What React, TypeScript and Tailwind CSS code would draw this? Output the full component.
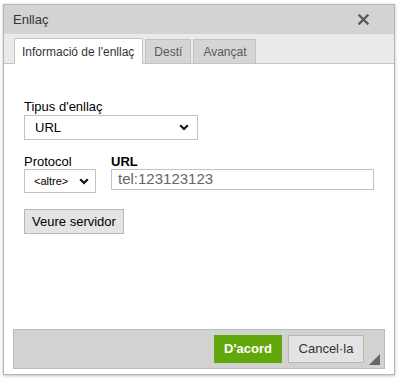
export default function App() {
  const font = { fontFamily: '"Liberation Sans", Arial, sans-serif' };

  const Chevron = () => (
    <svg width="10" height="7" viewBox="0 0 10 7" className="shrink-0">
      <path d="M1.2 1.2 L5 5 L8.8 1.2" fill="none" stroke="#111" strokeWidth="2.2" />
    </svg>
  );

  return (
    <div className="w-[399px] h-[380px] bg-white pt-[4px] pl-[3px] text-[13px] text-[#333]" style={font}>
      <div className="w-[392px] h-[371px] border border-[#b5b5b5] shadow-[0_1px_3px_rgba(0,0,0,0.25)] flex flex-col bg-white">
        {/* Title */}
        <div className="h-[29px] bg-[#d3d4d2] flex items-center justify-between pl-[9px] pr-[25px] shrink-0">
          <span className="text-[13px] text-[#333]">Enllaç</span>
          <svg width="11" height="11" viewBox="0 0 11 11">
            <path d="M1.5 1.5 L9.5 9.5 M9.5 1.5 L1.5 9.5" stroke="#5a5a5a" strokeWidth="2.4" strokeLinecap="square" />
          </svg>
        </div>

        {/* Tabs */}
        <div className="h-[30px] bg-[#eaeaea] border-b border-[#c4c4c4] flex items-end pl-[10px] gap-[2px] shrink-0 text-[12px]">
          <div className="h-[26px] -mb-px bg-white border border-b-0 border-[#c4c4c4] pl-[7px] pr-[8px] flex items-center text-[#333]">
            Informació de l'enllaç
          </div>
          <div className="h-[24px] bg-[#d5d5d5] border border-b-0 border-[#c4c4c4] pl-[8px] pr-[8px] flex items-center text-[#595959]">
            Destí
          </div>
          <div className="h-[24px] bg-[#d5d5d5] border border-b-0 border-[#c4c4c4] pl-[9px] pr-[8px] flex items-center text-[#595959]">
            Avançat
          </div>
        </div>

        {/* Content */}
        <div className="flex-1 px-[20px] pt-[35px] text-black">
          <div className="leading-[15px] mb-[1px]">Tipus d'enllaç</div>
          <div className="w-[174px] h-[25px] border border-[#c2c2c2] flex items-center justify-between pl-[10px] pr-[8px]">
            <span className="text-[13px]">URL</span>
            <Chevron />
          </div>

          <div className="flex gap-[15px] mt-[14px]">
            <div>
              <div className="leading-[15px]">Protocol</div>
              <div className="w-[72px] h-[24px] border border-[#c2c2c2] flex items-center justify-between pl-[9px] pr-[6px]">
                <span className="text-[11px]">&lt;altre&gt;</span>
                <Chevron />
              </div>
            </div>
            <div>
              <div className="leading-[15px] font-bold">URL</div>
              <div className="w-[263px] h-[21px] border border-[#c2c2c2] flex items-center pl-[6px]">
                <span className="text-[15px] text-[#666]">tel:123123123</span>
              </div>
            </div>
          </div>

          <div className="mt-[16px] w-[100px] h-[25px] bg-[#e4e4e4] border border-[#b6b6b6] flex items-center justify-center text-black">
            Veure servidor
          </div>
        </div>

        {/* Footer */}
        <div className="h-[40px] ml-[9px] mr-[9px] mb-[5px] bg-[#d1d3d0] border border-[#bcbcbc] flex items-center justify-end gap-[6px] pr-[20px] relative shrink-0">
          <div className="w-[68px] h-[28px] bg-[#62a80c] text-white font-bold flex items-center justify-center">
            D'acord
          </div>
          <div className="w-[76px] h-[28px] bg-[#e4e4e4] border border-[#b6b6b6] text-[#333] flex items-center justify-center">
            Cancel·la
          </div>
          <svg width="11" height="11" viewBox="0 0 11 11" className="absolute right-[4px] bottom-[3px]">
            <path d="M11 0 L11 11 L0 11 Z" fill="#666" />
          </svg>
        </div>
      </div>
    </div>
  );
}
